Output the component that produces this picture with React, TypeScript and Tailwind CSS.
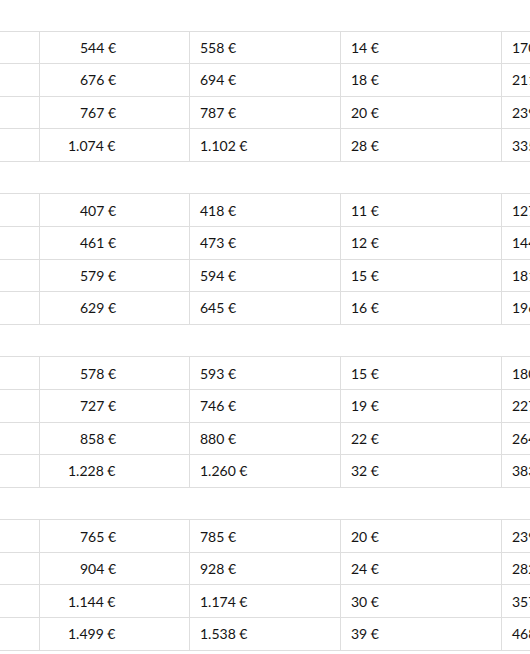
const groups: string[][][] = [
  [
    ['544 €', '558 €', '14 €', '170 €'],
    ['676 €', '694 €', '18 €', '211 €'],
    ['767 €', '787 €', '20 €', '239 €'],
    ['1.074 €', '1.102 €', '28 €', '335 €'],
  ],
  [
    ['407 €', '418 €', '11 €', '127 €'],
    ['461 €', '473 €', '12 €', '144 €'],
    ['579 €', '594 €', '15 €', '181 €'],
    ['629 €', '645 €', '16 €', '196 €'],
  ],
  [
    ['578 €', '593 €', '15 €', '180 €'],
    ['727 €', '746 €', '19 €', '227 €'],
    ['858 €', '880 €', '22 €', '264 €'],
    ['1.228 €', '1.260 €', '32 €', '383 €'],
  ],
  [
    ['765 €', '785 €', '20 €', '239 €'],
    ['904 €', '928 €', '24 €', '282 €'],
    ['1.144 €', '1.174 €', '30 €', '357 €'],
    ['1.499 €', '1.538 €', '39 €', '468 €'],
  ],
];

// Zeile mit den Preisen, erste Spalte ist links abgeschnitten
function PriceRow({ cells }: { cells: string[] }) {
  const short = !cells[0].includes('.');
  return (
    <div className="flex h-[32.58px] border-b border-[#dedede] items-stretch">
      <div className="w-[39px] shrink-0" />
      <div className="w-[150px] shrink-0 border-l border-[#dedede] flex items-center pl-[28px]">
        <span className={short ? 'pl-[12px]' : ''}>{cells[0]}</span>
      </div>
      <div className="w-[151px] shrink-0 border-l border-[#dedede] flex items-center pl-[10px]">
        {cells[1]}
      </div>
      <div className="w-[161px] shrink-0 border-l border-[#dedede] flex items-center pl-[10px]">
        {cells[2]}
      </div>
      <div className="w-[160px] shrink-0 border-l border-[#dedede] flex items-center pl-[10px]">
        {cells[3]}
      </div>
    </div>
  );
}

export default function App() {
  return (
    <div
      className="w-[530px] h-[654px] overflow-hidden bg-white text-[14px] text-[#141414]"
      style={{ fontFamily: 'Lato, "Open Sans", sans-serif' }}
    >
      <div className="w-[700px] -mt-px">
        {groups.map((rows, gi) => (
          <div key={gi}>
            {/* leere Kopfzeile der Gruppe */}
            <div className="h-[32.58px] border-b border-[#dedede]" />
            {rows.map((cells, ri) => (
              <PriceRow key={ri} cells={cells} />
            ))}
          </div>
        ))}
      </div>
    </div>
  );
}
